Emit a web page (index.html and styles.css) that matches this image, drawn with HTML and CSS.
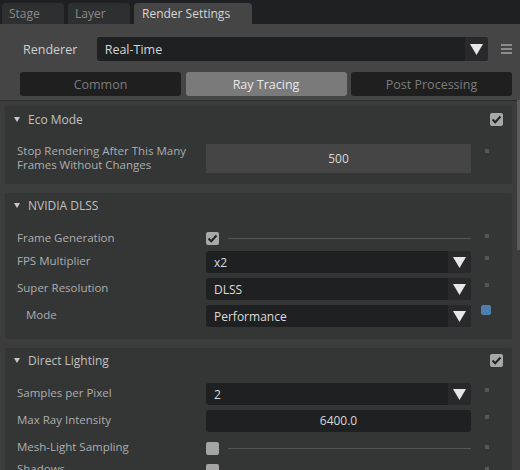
FILE: index.html
```html
<!DOCTYPE html>
<html>
<head>
<meta charset="utf-8">
<link rel="stylesheet" href="styles.css">
</head>
<body>
<div class="window">
  <div class="tabbar">
    <div class="tab">Stage</div>
    <div class="tab">Layer</div>
    <div class="tab active">Render Settings</div>
  </div>
  <div class="top">
    <div class="renderer-row">
      <div class="renderer-label">Renderer</div>
      <div class="combo big">
        <span class="combo-text">Real-Time</span>
        <span class="combo-arrow"><svg width="13" height="11" viewBox="0 0 13 11"><path d="M0 0H13L6.5 11Z" fill="#e6e6e6"/></svg></span>
      </div>
      <div class="menu-icon"><span></span><span></span><span></span></div>
    </div>
    <div class="subtabs">
      <div class="subtab">Common</div>
      <div class="subtab active">Ray Tracing</div>
      <div class="subtab">Post Processing</div>
    </div>
  </div>
  <div class="scroll">
    <div class="group g1">
      <div class="group-head">
        <span class="tri"></span><span class="group-title">Eco Mode</span>
        <span class="check head-check"><svg width="11" height="9" viewBox="0 0 11 9"><path d="M1.5 4.5L4.2 7.2L9.5 1.5" fill="none" stroke="#222" stroke-width="2"/></svg></span>
      </div>
      <div class="row tall">
        <div class="label">Stop Rendering After This Many<br>Frames Without Changes</div>
        <div class="field light">500</div>
        <div class="dot"></div>
      </div>
    </div>

    <div class="group g2">
      <div class="group-head">
        <span class="tri"></span><span class="group-title">NVIDIA DLSS</span>
      </div>
      <div class="row r-check">
        <div class="label">Frame Generation</div>
        <div class="checkline">
          <span class="check"><svg width="11" height="9" viewBox="0 0 11 9"><path d="M1.5 4.5L4.2 7.2L9.5 1.5" fill="none" stroke="#222" stroke-width="2"/></svg></span>
          <span class="line"></span>
        </div>
        <div class="dot"></div>
      </div>
      <div class="row r-combo">
        <div class="label">FPS Multiplier</div>
        <div class="combo"><span class="combo-text">x2</span><span class="combo-arrow"><svg width="13" height="11" viewBox="0 0 13 11"><path d="M0 0H13L6.5 11Z" fill="#e6e6e6"/></svg></span></div>
        <div class="dot"></div>
      </div>
      <div class="row r-combo">
        <div class="label">Super Resolution</div>
        <div class="combo"><span class="combo-text">DLSS</span><span class="combo-arrow"><svg width="13" height="11" viewBox="0 0 13 11"><path d="M0 0H13L6.5 11Z" fill="#e6e6e6"/></svg></span></div>
        <div class="dot"></div>
      </div>
      <div class="row r-combo">
        <div class="label indent">Mode</div>
        <div class="combo"><span class="combo-text">Performance</span><span class="combo-arrow"><svg width="13" height="11" viewBox="0 0 13 11"><path d="M0 0H13L6.5 11Z" fill="#e6e6e6"/></svg></span></div>
        <div class="blue"></div>
      </div>
    </div>

    <div class="group g3">
      <div class="group-head">
        <span class="tri"></span><span class="group-title">Direct Lighting</span>
        <span class="check head-check"><svg width="11" height="9" viewBox="0 0 11 9"><path d="M1.5 4.5L4.2 7.2L9.5 1.5" fill="none" stroke="#222" stroke-width="2"/></svg></span>
      </div>
      <div class="row r-combo">
        <div class="label">Samples per Pixel</div>
        <div class="combo"><span class="combo-text">2</span><span class="combo-arrow"><svg width="13" height="11" viewBox="0 0 13 11"><path d="M0 0H13L6.5 11Z" fill="#e6e6e6"/></svg></span></div>
        <div class="dot"></div>
      </div>
      <div class="row r-combo">
        <div class="label">Max Ray Intensity</div>
        <div class="field dark">6400.0</div>
        <div class="dot"></div>
      </div>
      <div class="row r-check2">
        <div class="label">Mesh-Light Sampling</div>
        <div class="checkline">
          <span class="check"></span>
          <span class="line"></span>
        </div>
        <div class="dot"></div>
      </div>
      <div class="row r-check2">
        <div class="label">Shadows</div>
        <div class="checkline">
          <span class="check"></span>
          <span class="line"></span>
        </div>
        <div class="dot"></div>
      </div>
    </div>
  </div>
  <div class="scrollthumb"></div>
</div>
</body>
</html>
```

FILE: styles.css
```css
html, body {
  margin: 0;
  padding: 0;
  background: #454545;
  width: 520px;
  height: 470px;
  overflow: hidden;
}
.window {
  position: relative;
  width: 520px;
  height: 470px;
  font-family: "Open Sans", "Noto Sans", sans-serif;
  font-size: 11.5px;
  color: #b4b4b4;
  overflow: hidden;
}
.tabbar {
  height: 24px;
  background: #1f2023;
  display: flex;
  align-items: flex-end;
  padding-left: 2px;
  gap: 4px;
}
.tab {
  height: 21px;
  width: 55px;
  padding-left: 7px;
  background: #2e2f31;
  color: #8a8a8a;
  border-radius: 4px 4px 0 0;
  line-height: 22px;
  font-size: 12px;
}
.tab.active {
  width: 110px;
  padding-left: 8px;
  background: #454545;
  color: #d6d6d6;
}
.top {
  background: #454545;
  padding: 13px 8px 4px 20px;
}
.renderer-row {
  display: flex;
  align-items: center;
  height: 24px;
}
.renderer-label {
  width: 74px;
  padding-left: 3px;
  color: #d0d0d0;
  font-size: 12.5px;
}
.combo {
  display: flex;
  align-items: center;
  background: #1f2022;
  border-radius: 3px;
  height: 22px;
  width: 265px;
  overflow: hidden;
}
.combo.big {
  width: 393px;
  height: 24px;
}
.combo-text {
  flex: 1;
  padding-left: 8px;
  color: #dcdcdc;
  font-size: 12px;
}
.combo.big .combo-text {
  font-size: 12.5px;
  color: #d6d6d6;
}
.combo-arrow {
  width: 23px;
  height: 100%;
  background: #29292b;
  display: flex;
  align-items: center;
  justify-content: center;
}
.menu-icon {
  margin-left: 13px;
  width: 11px;
  display: flex;
  flex-direction: column;
  gap: 2px;
}
.menu-icon span {
  height: 2px;
  background: #8a8d8e;
}
.subtabs {
  margin-top: 11px;
  display: flex;
  gap: 4.5px;
}
.subtab {
  flex: 1;
  height: 24px;
  line-height: 26px;
  text-align: center;
  background: #1f1f20;
  color: #7c7c7c;
  border-radius: 3px;
  font-size: 12.5px;
}
.subtab.active {
  background: #7a7a7a;
  color: #e8e8e8;
}
.scroll {
  background: #3c3c3c;
  padding: 4px 7px 0 4px;
  display: flex;
  flex-direction: column;
  gap: 7px;
  border-top: 1px solid #2c2c2c;
}
.group {
  background: #343535;
  border: 1px solid #3a3b3b;
  border-radius: 3px;
}
.group-head {
  height: 27px;
  display: flex;
  align-items: center;
  position: relative;
}
.g2 .group-head,
.g3 .group-head {
  height: 24px;
}
.tri {
  width: 0;
  height: 0;
  margin-left: 9px;
  border-left: 3px solid transparent;
  border-right: 3px solid transparent;
  border-top: 5px solid #c8c8c8;
}
.group-title {
  margin-left: 8px;
  color: #c0c0c0;
  font-size: 12px;
}
.check {
  width: 13px;
  height: 13px;
  background: #a8a8a8;
  border-radius: 2px;
  display: flex;
  align-items: center;
  justify-content: center;
  flex: none;
}
.head-check {
  margin-left: auto;
  margin-right: 9px;
}
.row {
  display: flex;
  align-items: center;
  padding-left: 12px;
}
.label {
  width: 189px;
  color: #aeaeae;
  line-height: 14px;
  position: relative;
  top: -1px;
}
.label.indent {
  padding-left: 9px;
  width: 180px;
}
.field {
  width: 265px;
  text-align: center;
  color: #d8d8d8;
  font-size: 12px;
}
.field.light {
  height: 29px;
  line-height: 29px;
  background: #454545;
}
.field.dark {
  height: 22px;
  line-height: 22px;
  background: #1f2022;
  border-radius: 3px;
}
.dot {
  width: 4px;
  height: 4px;
  background: #555656;
  margin-left: 14px;
  align-self: flex-start;
  margin-top: 5px;
}
.row.tall {
  margin-top: 11px;
  margin-bottom: 11px;
}
.blue {
  width: 10px;
  height: 10px;
  background: #4f7fac;
  border-radius: 2px;
  margin-left: 10px;
  align-self: flex-start;
}
.checkline {
  width: 265px;
  display: flex;
  align-items: center;
}
.line {
  flex: 1;
  height: 1px;
  background: #555;
  margin-left: 9px;
}
.r-check {
  margin-top: 13px;
  height: 17px;
}
.r-check .dot {
  margin-top: 4px;
}
.r-combo {
  margin-top: 4px;
  height: 22px;
}
.r-combo + .r-combo {
  margin-top: 5px;
}
.g2 {
  padding-bottom: 12px;
}
.g3 .group-head + .row {
  margin-top: 11px;
}
.r-check2 {
  margin-top: 9px;
  height: 14px;
}
.r-check2 + .r-check2 {
  margin-top: 8px;
}
.r-check2 .dot {
  margin-top: 4px;
}
.r-check2 .check {
  background: #a4a4a4;
}
.scrollthumb {
  position: absolute;
  right: 0;
  top: 100px;
  width: 3px;
  height: 150px;
  background: #5c5c5c;
}
```
